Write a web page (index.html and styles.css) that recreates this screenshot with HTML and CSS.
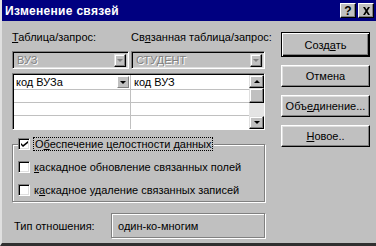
FILE: index.html
```html
<!DOCTYPE html>
<html>
<head>
<meta charset="utf-8">
<link rel="stylesheet" href="styles.css">
</head>
<body>
<div class="win">
  <div class="title">
    <span class="title-text">Изменение связей</span>
    <div class="tbtns">
      <span class="tb">?</span>
      <span class="tb tb-x">
        <svg width="9" height="8" viewBox="0 0 9 8"><path d="M1 0h2l1.5 2.5L6 0h2L5.5 4 8 8H6L4.5 5.5 3 8H1l2.5-4z" fill="#000"/></svg>
      </span>
    </div>
  </div>
  <div class="body">
    <div class="left">
      <div class="labels">
        <span class="lbl lbl1"><u>Т</u>аблица/запрос:</span>
        <span class="lbl lbl2">Св<u>я</u>занная таблица/запрос:</span>
      </div>
      <div class="combos">
        <div class="combo c1"><span class="dis">ВУЗ</span><span class="arrow-btn"><span class="tri dis-tri"></span></span></div>
        <div class="combo c2"><span class="dis">СТУДЕНТ</span><span class="arrow-btn"><span class="tri dis-tri"></span></span></div>
      </div>
      <div class="grid">
        <div class="rows">
          <div class="row">
            <div class="cell cl">код ВУЗа<span class="cell-btn"><span class="tri"></span></span></div>
            <div class="cell cr">код ВУЗ</div>
          </div>
          <div class="row"><div class="cell cl"></div><div class="cell cr"></div></div>
          <div class="row"><div class="cell cl"></div><div class="cell cr"></div></div>
          <div class="row last"><div class="cell cl"></div><div class="cell cr"></div></div>
        </div>
        <div class="vscroll">
          <span class="sbtn"><span class="tri up"></span></span>
          <span class="thumb"></span>
          <span class="track"></span>
          <span class="sbtn"><span class="tri"></span></span>
        </div>
      </div>
      <div class="group">
        <div class="legend"><span class="chk"><svg width="7" height="7" viewBox="0 0 7 7"><path d="M0 2l2 2 5-4v2l-5 4-2-2z" fill="#000"/></svg></span><span class="focus">О<u>б</u>еспечение целостности данных</span></div>
        <div class="opt"><span class="chk"></span><span><u>к</u>аскадное обновление связанных полей</span></div>
        <div class="opt"><span class="chk"></span><span>к<u>а</u>скадное удаление связанных записей</span></div>
      </div>
      <div class="reltype">
        <span class="rt-lbl">Тип отношения:</span>
        <div class="rt-box">один-ко-многим</div>
      </div>
    </div>
    <div class="right">
      <div class="btn default"><span>Созд<u>а</u>ть</span></div>
      <div class="btn">Отмена</div>
      <div class="btn">Объ<u>е</u>динение...</div>
      <div class="btn"><u>Н</u>овое..</div>
    </div>
  </div>
</div>
</body>
</html>
```

FILE: styles.css
```css
* { box-sizing: border-box; }
html, body { margin: 0; padding: 0; background: #c0c0c0; }
body {
  font-family: "Liberation Sans", Arial, sans-serif;
  font-size: 11px;
  color: #000;
}
.win {
  width: 376px;
  height: 246px;
  background: #c0c0c0;
  border-left: 2px solid #e0e0e0;
  border-bottom: 3px solid #303030;
  display: flex;
  flex-direction: column;
  overflow: hidden;
}
.title {
  height: 21px;
  background: #000080;
  display: flex;
  align-items: center;
  justify-content: space-between;
  padding: 0 2px 0 3px;
}
.title-text {
  color: #fff;
  font-weight: bold;
  font-size: 12px;
  letter-spacing: 0.3px;
}
.tbtns { display: flex; gap: 2px; }
.tb {
  width: 16px;
  height: 15px;
  background: #c0c0c0;
  border-top: 1px solid #fff;
  border-left: 1px solid #fff;
  border-right: 1px solid #000;
  border-bottom: 1px solid #000;
  box-shadow: inset -1px -1px 0 #808080;
  display: flex;
  align-items: center;
  justify-content: center;
  font-weight: bold;
  font-size: 12px;
  line-height: 1;
}
.body {
  flex: 1;
  display: flex;
  padding: 10px 0 0 10px;
}
.left {
  width: 253px;
  display: flex;
  flex-direction: column;
}
.labels {
  display: flex;
  height: 20px;
  align-items: flex-start;
  white-space: nowrap;
}
.lbl1 { width: 119px; flex: none; }
.lbl { color: #000; }
.combos {
  display: flex;
  gap: 2px;
  height: 18px;
}
.combo {
  height: 18px;
  background: #c0c0c0;
  border-top: 1px solid #808080;
  border-left: 1px solid #808080;
  border-right: 1px solid #fff;
  border-bottom: 1px solid #fff;
  box-shadow: inset 1px 1px 0 #000, inset -1px -1px 0 #dfdfdf;
  display: flex;
  align-items: center;
  justify-content: space-between;
  padding: 0 2px 0 4px;
}
.c1 { width: 117px; }
.c2 { width: 134px; }
.dis {
  color: #808080;
  text-shadow: 1px 1px 0 #fff;
}
.arrow-btn {
  width: 12px;
  height: 13px;
  background: #c0c0c0;
  border-top: 1px solid #dfdfdf;
  border-left: 1px solid #dfdfdf;
  border-right: 1px solid #000;
  border-bottom: 1px solid #000;
  box-shadow: inset -1px -1px 0 #808080, inset 1px 1px 0 #fff;
  display: flex;
  align-items: center;
  justify-content: center;
}
.tri {
  width: 0;
  height: 0;
  border-left: 3px solid transparent;
  border-right: 3px solid transparent;
  border-top: 3px solid #000;
}
.tri.up { border-top: 0; border-bottom: 3px solid #000; }
.dis-tri { border-top-color: #808080; }
.grid {
  margin-top: 4px;
  height: 57px;
  background: #fff;
  border-top: 1px solid #808080;
  border-left: 1px solid #808080;
  border-right: 1px solid #fff;
  border-bottom: 1px solid #fff;
  box-shadow: inset 1px 1px 0 #000;
  display: flex;
  padding: 1px 0 0 1px;
}
.rows { flex: 1; display: flex; flex-direction: column; }
.row {
  display: flex;
  height: 13px;
  border-bottom: 1px solid #c0c0c0;
}
.row:first-child { height: 15px; }
.row.last { border-bottom: 0; flex: 1; }
.cell {
  height: 100%;
  display: flex;
  align-items: center;
  position: relative;
}
.cl {
  width: 117px;
  border-right: 1px solid #c0c0c0;
  padding-left: 2px;
}
.cr { flex: 1; padding-left: 3px; }
.cell-btn {
  position: absolute;
  right: 1px;
  top: 1px;
  width: 12px;
  height: 12px;
  background: #c0c0c0;
  border-top: 1px solid #fff;
  border-left: 1px solid #fff;
  border-right: 1px solid #808080;
  border-bottom: 1px solid #808080;
  display: flex;
  align-items: center;
  justify-content: center;
}
.vscroll {
  width: 15px;
  display: flex;
  flex-direction: column;
  background: #e4e4e4;
}
.sbtn {
  height: 13px;
  background: #c0c0c0;
  border-top: 1px solid #dfdfdf;
  border-left: 1px solid #dfdfdf;
  border-right: 1px solid #000;
  border-bottom: 1px solid #000;
  box-shadow: inset -1px -1px 0 #808080, inset 1px 1px 0 #fff;
  display: flex;
  align-items: center;
  justify-content: center;
}
.thumb {
  height: 15px;
  background: #c0c0c0;
  border-top: 1px solid #dfdfdf;
  border-left: 1px solid #dfdfdf;
  border-right: 1px solid #000;
  border-bottom: 1px solid #000;
  box-shadow: inset -1px -1px 0 #808080, inset 1px 1px 0 #fff;
}
.track { flex: 1; }
.group {
  margin-top: 14px;
  height: 58px;
  border: 1px solid #808080;
  box-shadow: 1px 1px 0 #fff, inset 1px 1px 0 #fff;
  position: relative;
  padding: 15px 0 0 5px;
  display: flex;
  flex-direction: column;
  gap: 10px;
}
.legend {
  position: absolute;
  top: -7px;
  left: 5px;
  background: #c0c0c0;
  display: flex;
  align-items: center;
  padding-right: 2px;
}
.opt { display: flex; align-items: center; height: 13px; }
.chk {
  width: 12px;
  height: 12px;
  background: #fff;
  border-top: 1px solid #808080;
  border-left: 1px solid #808080;
  border-right: 1px solid #fff;
  border-bottom: 1px solid #fff;
  box-shadow: inset 1px 1px 0 #000, inset -1px -1px 0 #dfdfdf;
  margin-right: 4px;
  display: flex;
  align-items: center;
  justify-content: center;
}
.focus {
  outline: 1px dotted #000;
  padding: 0 1px;
}
.reltype {
  margin-top: 11px;
  display: flex;
  align-items: center;
}
.rt-lbl { width: 99px; padding-left: 2px; }
.rt-box {
  flex: 1;
  height: 25px;
  border: 1px solid #808080;
  box-shadow: 1px 1px 0 #fff, inset 1px 1px 0 #fff;
  display: flex;
  align-items: center;
  padding-left: 6px;
}
.right {
  margin-left: 16px;
  width: 89px;
  display: flex;
  flex-direction: column;
  gap: 8px;
  padding-top: 1px;
}
.btn {
  height: 22px;
  background: #c0c0c0;
  border-top: 1px solid #fff;
  border-left: 1px solid #fff;
  border-right: 1px solid #000;
  border-bottom: 1px solid #000;
  box-shadow: inset -1px -1px 0 #808080, inset 1px 1px 0 #dfdfdf;
  display: flex;
  align-items: center;
  justify-content: center;
}
.btn.default {
  height: 25px;
  border: 1px solid #000;
  box-shadow: inset 1px 1px 0 #fff, inset -1px -1px 0 #000, inset -2px -2px 0 #808080;
}
```
